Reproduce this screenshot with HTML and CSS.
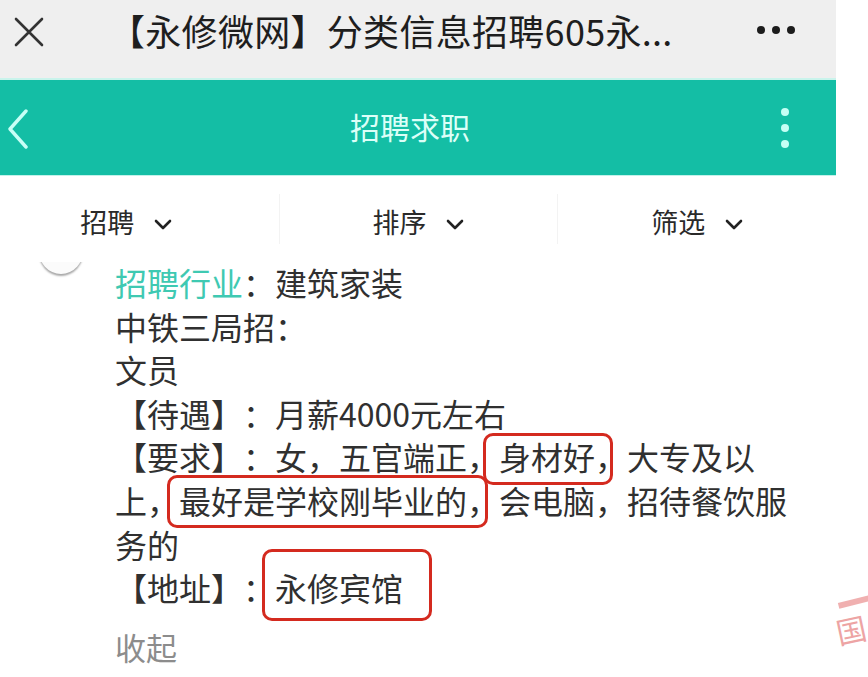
FILE: index.html
```html
<!DOCTYPE html>
<html lang="zh-CN">
<head>
<meta charset="utf-8">
<title>招聘求职</title>
<link rel="stylesheet" href="styles.css">
</head>
<body>
<div class="screen">
  <div class="phone">
    <header class="topbar">
      <svg class="close" width="30" height="30" viewBox="0 0 30 30"><path d="M2 2 L28 28 M28 2 L2 28" stroke="#333" stroke-width="2.6" fill="none" stroke-linecap="round"/></svg>
      <div class="page-title">【永修微网】分类信息招聘605永...</div>
      <div class="more"><i></i><i></i><i></i></div>
    </header>
    <nav class="navbar">
      <div class="nav-left">
        <svg width="22" height="40" viewBox="0 0 22 40"><path d="M19 2 L3 20 L19 38" stroke="#c8fff6" stroke-width="3.4" fill="none" stroke-linecap="round" stroke-linejoin="round"/></svg>
      </div>
      <div class="nav-title">招聘求职</div>
      <div class="nav-right"><i></i><i></i><i></i></div>
    </nav>
    <div class="tabs">
      <div class="tab">招聘<svg class="chev" width="18" height="11" viewBox="0 0 18 11"><path d="M2 2 L9 9 L16 2" stroke="#222" stroke-width="2.6" fill="none" stroke-linecap="round" stroke-linejoin="round"/></svg></div>
      <div class="tab sep">排序<svg class="chev" width="18" height="11" viewBox="0 0 18 11"><path d="M2 2 L9 9 L16 2" stroke="#222" stroke-width="2.6" fill="none" stroke-linecap="round" stroke-linejoin="round"/></svg></div>
      <div class="tab sep">筛选<svg class="chev" width="18" height="11" viewBox="0 0 18 11"><path d="M2 2 L9 9 L16 2" stroke="#222" stroke-width="2.6" fill="none" stroke-linecap="round" stroke-linejoin="round"/></svg></div>
    </div>
    <main class="content">
      <div class="avatar"></div>
      <div class="body-text">
        <p><span class="label">招聘行业</span>：建筑家装</p>
        <p>中铁三局招：</p>
        <p>文员</p>
        <p>【待遇】：月薪4000元左右</p>
        <p>【要求】：女，五官端正，<span class="mark m1">身材好，</span>大专及以上，<span class="mark m2">最好是学校刚毕业的，</span>会电脑，招待餐饮服务的</p>
        <p>【地址】：<span class="mark m3">永修宾馆</span></p>
        <p class="collapse">收起</p>
      </div>
    </main>
  </div>
  <div class="stamp"><span class="stamp-line"></span><span class="stamp-char">国</span></div>
</div>
</body>
</html>
```
FILE: styles.css
```css
html, body {
  margin: 0;
  padding: 0;
  background: #ffffff;
}
body {
  font-family: "Noto Sans CJK SC", "Noto Sans", sans-serif;
  color: #2e2e2e;
  text-spacing-trim: space-all;
}
.screen {
  position: relative;
  width: 868px;
  height: 677px;
  overflow: hidden;
  background: #ffffff;
}
.phone {
  width: 836px;
  height: 677px;
  overflow: hidden;
}

/* top browser bar */
.topbar {
  height: 78px;
  background: #efefef;
  display: flex;
  align-items: center;
  padding-left: 14px;
  border-bottom: 2px solid #c9f4ec;
}
.close {
  display: block;
  margin-top: -14px;
}
.page-title {
  margin-left: 65px;
  font-size: 36px;
  line-height: 1;
  color: #1e1e1e;
  white-space: nowrap;
  margin-top: -18px;
  letter-spacing: 0.3px;
}
.more {
  margin-left: auto;
  margin-right: 41px;
  display: flex;
  gap: 7px;
  margin-top: -18px;
}
.more i {
  display: block;
  width: 8px;
  height: 8px;
  border-radius: 50%;
  background: #1c1c1c;
}

/* teal nav */
.navbar {
  height: 95px;
  background: #14bea5;
  display: grid;
  grid-template-columns: 100px 1fr 100px;
  align-items: center;
  border-bottom: 1px solid #c3f2ea;
}
.nav-left {
  padding-left: 7px;
  display: flex;
  align-items: center;
  padding-top: 2px;
}
.nav-left svg { display: block; }
.nav-title {
  text-align: center;
  font-size: 30px;
  color: #dcfff8;
  padding-right: 16px;
  margin-top: -4px;
}
.nav-right {
  display: flex;
  flex-direction: column;
  align-items: center;
  gap: 8px;
  margin-left: -2px;
}
.nav-right i {
  display: block;
  width: 8px;
  height: 8px;
  border-radius: 50%;
  background: #c5fff5;
}

/* tabs */
.tabs {
  height: 86px;
  background: #ffffff;
  display: grid;
  grid-template-columns: 1fr 1fr 1fr;
  align-items: center;
}
.tab {
  display: flex;
  align-items: center;
  justify-content: center;
  gap: 20px;
  font-size: 27px;
  color: #2a2a2a;
  height: 46px;
  padding-top: 4px;
}
.tab:first-child { padding-right: 26px; }
.sep { border-left: 1px solid #f3f3f3; }
.chev { display: block; margin-top: 6px; }

/* content */
.content {
  position: relative;
  height: 415px;
  overflow: hidden;
}
.avatar {
  position: absolute;
  left: 38px;
  top: -40px;
  width: 46px;
  height: 52px;
  border-radius: 50%;
  background: #fbfbfb;
  box-shadow: 0 2px 2px rgba(0,0,0,0.35);
}
.body-text {
  padding-left: 115px;
  width: 680px;
  font-size: 32px;
  line-height: 43.6px;
  color: #303030;
  margin-top: -1px;
}
.body-text p { margin: 0; }
.label { color: #3fc9b2; }
.collapse {
  color: #8c8c8c;
  margin-top: 15px !important;
  font-size: 31px;
}
.mark {
  position: relative;
  display: inline-block;
}
.mark::before {
  content: "";
  position: absolute;
  border: 3.5px solid #d42a1f;
  border-radius: 10px;
}
.m1::before { top: -2px; bottom: -6px; left: -16px; right: 14px; }
.m2::before { top: -4px; bottom: -5px; left: -12px; right: 11px; }
.m3::before { top: -17px; bottom: -11px; left: -13px; right: -29px; }

/* partial stamp watermark at edge */
.stamp {
  position: absolute;
  left: 836px;
  top: 592px;
  width: 40px;
  height: 80px;
  opacity: 0.55;
}
.stamp-line {
  position: absolute;
  left: 2px;
  top: 6px;
  width: 40px;
  height: 6px;
  background: #e47070;
  transform: rotate(-14deg);
}
.stamp-char {
  position: absolute;
  left: 0;
  top: 22px;
  font-size: 30px;
  line-height: 1;
  color: #e05a5a;
  transform: rotate(-12deg);
}
```
